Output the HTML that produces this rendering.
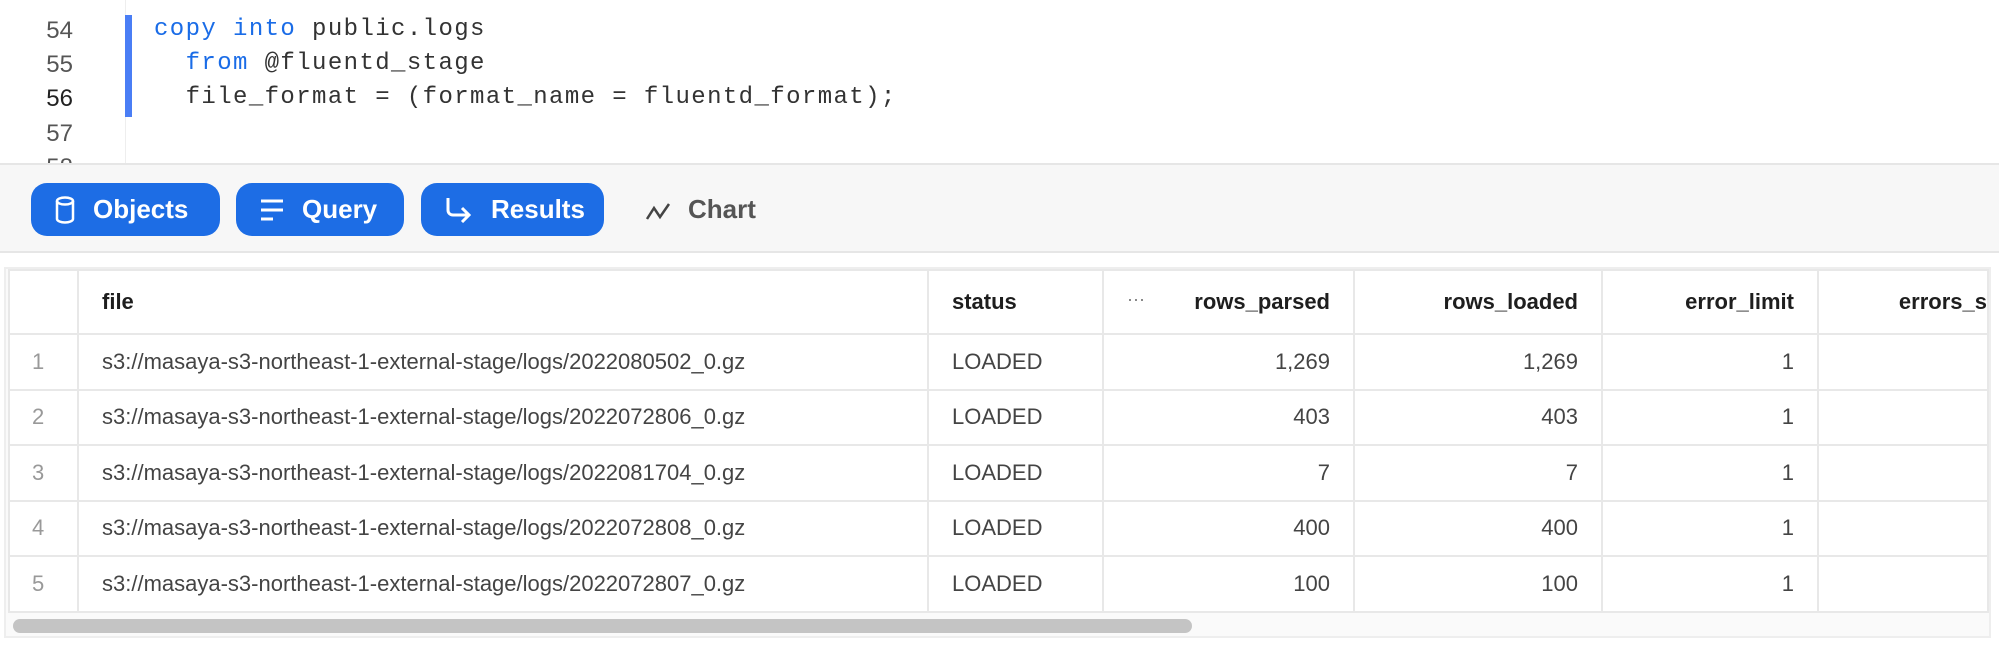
<!DOCTYPE html>
<html><head><meta charset="utf-8"><style>
*{margin:0;padding:0;box-sizing:border-box}
body{width:1999px;height:653px;overflow:hidden;background:#fff;font-family:"Liberation Sans",sans-serif;position:relative}
.ln{position:absolute;left:0;width:73px;text-align:right;font-family:"Liberation Sans",sans-serif;font-size:24px;color:#555;}
.code{position:absolute;left:154px;font-family:"Liberation Mono",monospace;font-size:24px;letter-spacing:1.4px;color:#333;white-space:pre}
.kw{color:#1a6ce7}
.tb{position:absolute;left:0;top:163px;width:1999px;height:90px;background:#f7f7f7;border-top:2px solid #e6e6e6;border-bottom:2px solid #e6e6e6}
.btn{position:absolute;top:18px;height:53px;background:#1d6de5;border-radius:16px;color:#fff;font-size:26px;font-weight:bold;display:flex;align-items:center;padding-left:24px}
.btn svg{margin-right:18px}
table{position:absolute;left:8px;top:269px;border-collapse:collapse;font-size:22px;table-layout:fixed;background:#fff}
td,th{border:2px solid #e8e8e8;height:55.5px;padding:0 23px;white-space:nowrap;overflow:hidden;background:#fff}
th{height:64px;text-align:left;color:#1e1e1e;font-weight:bold}
td{color:#444}
td.n{color:#999;padding:0 0 0 22px}
.r{text-align:right}
</style></head><body>
<div class="ln" style="top:-21px">53</div>
<div class="ln" style="top:17px">54</div>
<div class="ln" style="top:51px">55</div>
<div class="ln" style="top:85px;color:#222">56</div>
<div class="ln" style="top:120px">57</div>
<div class="ln" style="top:154px">58</div>
<div style="position:absolute;left:125px;top:0;width:1px;height:163px;background:#eee"></div>
<div style="position:absolute;left:125px;top:15px;width:7px;height:102px;background:#4a7ef5"></div>
<div class="code" style="top:16px"><span class="kw">copy into</span> public.logs</div>
<div class="code" style="top:50px">  <span class="kw">from</span> @fluentd_stage</div>
<div class="code" style="top:84px">  file_format = (format_name = fluentd_format);</div>
<div class="tb">
<div class="btn" style="left:31px;width:189px"><svg width="20" height="28" viewBox="0 0 20 28"><ellipse cx="10" cy="5" rx="8" ry="3.5" fill="none" stroke="#fff" stroke-width="2.5"/><path d="M2 5v18c0 2 4 3.5 8 3.5s8-1.5 8-3.5V5" fill="none" stroke="#fff" stroke-width="2.5"/></svg>Objects</div>
<div class="btn" style="left:236px;width:168px"><svg width="24" height="24" viewBox="0 0 24 24"><path d="M1 3h22M1 12h22M1 21h12" stroke="#fff" stroke-width="3"/></svg>Query</div>
<div class="btn" style="left:421px;width:183px"><svg width="28" height="26" viewBox="0 0 28 26"><path d="M3 1v12c0 3 2 5 5 5h16M17 11l7 7-7 7" fill="none" stroke="#fff" stroke-width="3"/></svg>Results</div>
<svg style="position:absolute;left:645px;top:36px" width="26" height="20" viewBox="0 0 26 20"><path d="M2 18L9 7l6 9L24 3" fill="none" stroke="#444" stroke-width="2.5"/></svg>
<div style="position:absolute;left:688px;top:29px;font-size:26px;font-weight:bold;color:#555">Chart</div>
</div>
<div style="position:absolute;left:4px;top:267px;width:1987px;height:371px;border:2px solid #eee;background:#fafafa"></div>
<table>
<colgroup><col style="width:69px"><col style="width:850px"><col style="width:175px"><col style="width:251px"><col style="width:248px"><col style="width:216px"><col style="width:170px"></colgroup>
<tr><th></th><th>file</th><th>status</th><th class="r"><span style="float:left;color:#777;font-weight:normal;font-size:18px">···</span>rows_parsed</th><th class="r">rows_loaded</th><th class="r">error_limit</th><th class="r" style="padding-right:0">errors_s</th></tr>
<tr><td class="n">1</td><td>s3://masaya-s3-northeast-1-external-stage/logs/2022080502_0.gz</td><td>LOADED</td><td class="r">1,269</td><td class="r">1,269</td><td class="r">1</td><td></td></tr>
<tr><td class="n">2</td><td>s3://masaya-s3-northeast-1-external-stage/logs/2022072806_0.gz</td><td>LOADED</td><td class="r">403</td><td class="r">403</td><td class="r">1</td><td></td></tr>
<tr><td class="n">3</td><td>s3://masaya-s3-northeast-1-external-stage/logs/2022081704_0.gz</td><td>LOADED</td><td class="r">7</td><td class="r">7</td><td class="r">1</td><td></td></tr>
<tr><td class="n">4</td><td>s3://masaya-s3-northeast-1-external-stage/logs/2022072808_0.gz</td><td>LOADED</td><td class="r">400</td><td class="r">400</td><td class="r">1</td><td></td></tr>
<tr><td class="n">5</td><td>s3://masaya-s3-northeast-1-external-stage/logs/2022072807_0.gz</td><td>LOADED</td><td class="r">100</td><td class="r">100</td><td class="r">1</td><td></td></tr>
</table>
<div style="position:absolute;left:13px;top:619px;width:1179px;height:14px;border-radius:7px;background:#c4c4c4"></div>
</body></html>
